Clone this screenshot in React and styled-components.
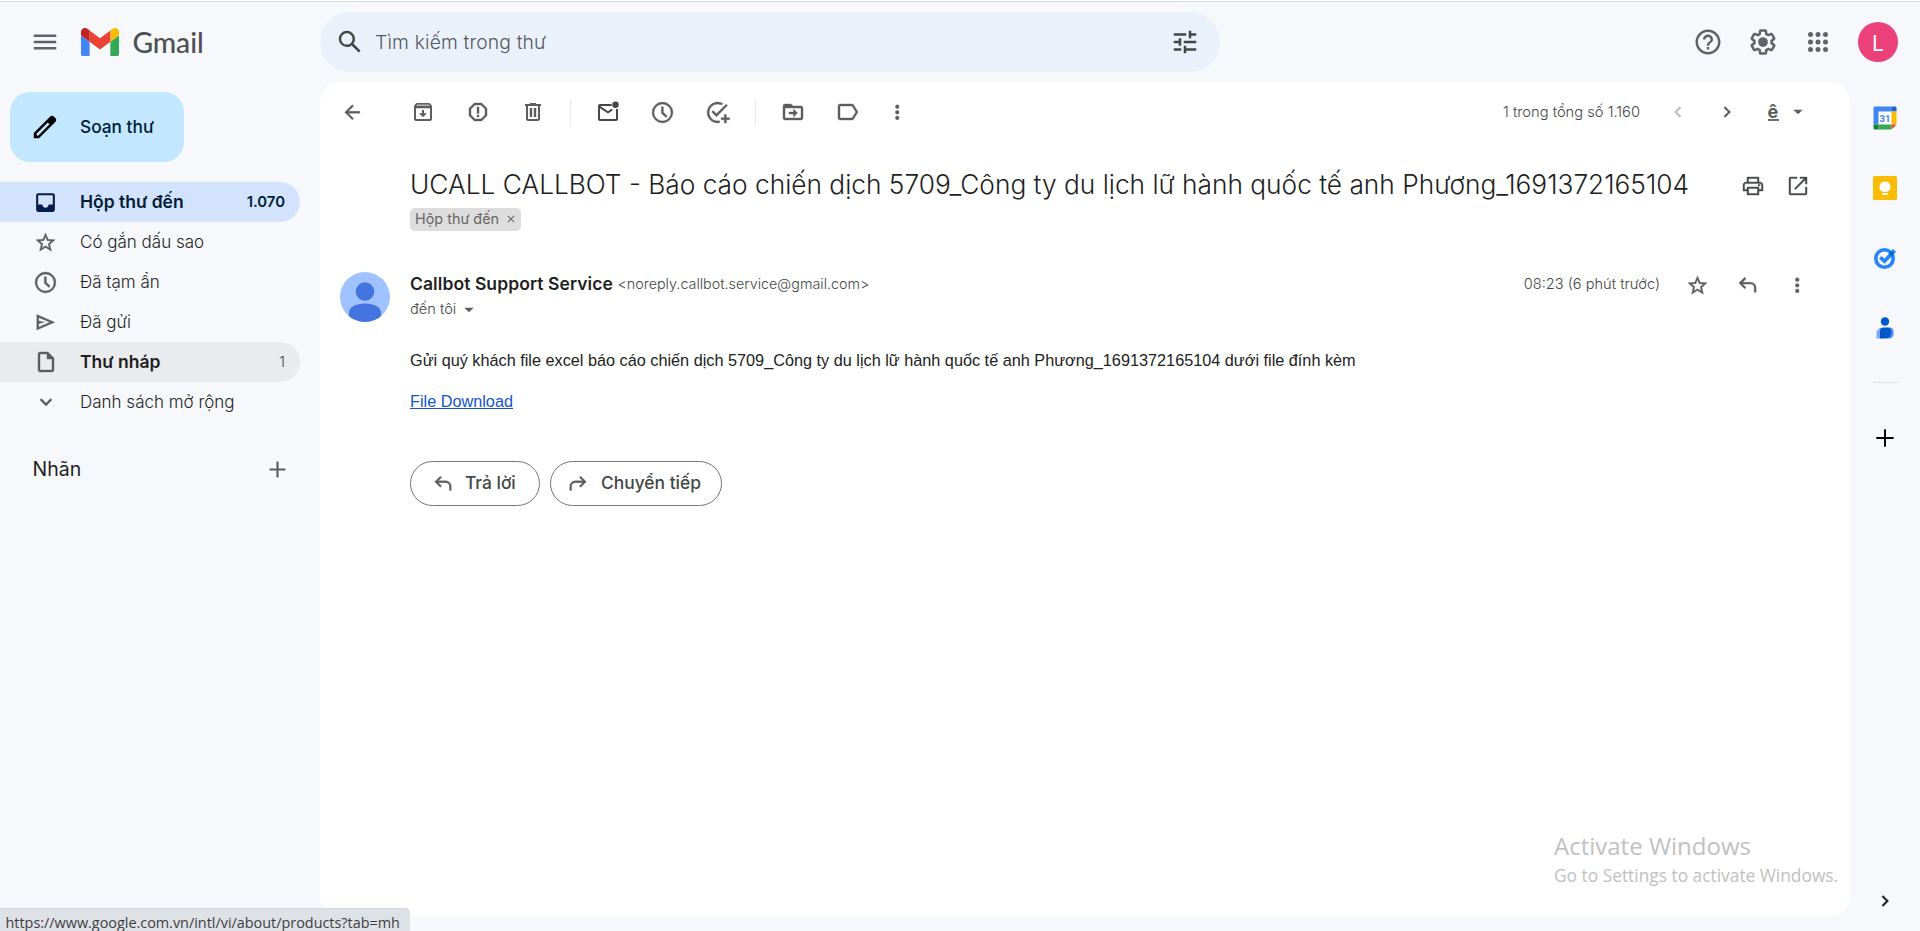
import React from "react";
import styled, { createGlobalStyle } from "styled-components";

const GlobalStyle = createGlobalStyle`
  *, *::before, *::after { box-sizing: border-box; }
  body { margin: 0; background: #f6f8fc; overflow: hidden; }
  button { border: 0; padding: 0; background: none; font: inherit; color: inherit; }
`;

const ui = `Inter, "Liberation Sans", sans-serif`;
const display = `Lato, "Liberation Sans", sans-serif`;
const system = `"Open Sans", "Noto Sans", sans-serif`;

const Page = styled.div`
  position: relative;
  display: flex;
  flex-direction: column;
  width: 1920px;
  height: 931px;
  overflow: hidden;
  background: #f6f8fc;
  color: #1f1f1f;
  font-family: ${ui};
`;
const TopEdge = styled.div`
  flex: none;
  height: 2px;
  background: #fff;
  border-bottom: 1px solid #d6dbd9;
`;
const Header = styled.header`
  flex: none;
  display: flex;
  align-items: center;
  height: 80px;
`;
const Brand = styled.div`
  display: flex;
  align-items: center;
  width: 320px;
  padding-left: 30px;
`;
const BrandName = styled.span`
  margin: -1px 0 0 13.5px;
  font: 500 28.3px/36px ${display};
  letter-spacing: -0.1px;
  color: #4d5053;
`;
const Logo = styled.svg`
  display: block;
  margin-left: 21px;
`;
const SearchBar = styled.div`
  display: flex;
  align-items: center;
  width: 900px;
  height: 60px;
  padding: 0 20px 0 15px;
  border-radius: 30px;
  background: #eaf1fb;
`;
const SearchText = styled.span`
  flex: 1;
  margin-left: 10px;
  font-size: 19.3px;
  font-weight: 300;
  letter-spacing: 0.16px;
  color: #55595d;
`;
const HeaderActions = styled.div`
  display: flex;
  align-items: center;
  margin-left: auto;
  padding-right: 22px;
`;
const HeaderButton = styled.button`
  display: grid;
  place-items: center;
  width: 55px;
  height: 50px;
`;
const Profile = styled.span`
  display: grid;
  place-items: center;
  width: 40px;
  height: 40px;
  margin-left: 13px;
  padding-top: 2px;
  border-radius: 50%;
  background: #ec407a;
  color: #fff;
  font-size: 21px;
`;
const Content = styled.div`
  flex: 1;
  display: flex;
  min-height: 0;
`;
const Sidebar = styled.nav`
  width: 320px;
  padding-top: 10px;
`;
const Compose = styled.button`
  display: flex;
  align-items: center;
  width: 174px;
  height: 70px;
  margin: 0 0 20px 10px;
  padding-left: 20px;
  border-radius: 20px;
  background: #c2e7ff;
  color: #001d35;
  font: 500 17.3px ${ui};
`;
const ComposeLabel = styled.span`
  margin: -1px 0 0 20px;
`;
const Folder = styled.div`
  display: flex;
  align-items: center;
  width: 300px;
  height: 40px;
  padding: 0 15px 0 33px;
  border-radius: 0 20px 20px 0;
  background: ${(p) => (p.$active ? "#d3e3fd" : p.$hover ? "#e9ebee" : "transparent")};
  color: ${(p) => (p.$active ? "#001d35" : "#1f1f1f")};
`;
const FolderName = styled.span`
  flex: 1;
  margin: -1px 0 0 22px;
  font: ${(p) => (p.$bold ? `600 17.5px ${ui}` : `300 17px ${ui}`)};
`;
const FolderCount = styled.span`
  margin-top: -1px;
  font: ${(p) => (p.$bold ? `600 14.9px ${ui}` : `300 14.5px ${ui}`)};
  color: ${(p) => (p.$bold ? "#001d35" : "#444746")};
`;
const LabelsHead = styled.div`
  display: flex;
  align-items: center;
  justify-content: space-between;
  height: 40px;
  margin-top: 27px;
  padding: 0 31px 0 32.5px;
  font: 400 19.5px ${ui};
`;
const Main = styled.main`
  width: 1530px;
  height: 834px;
  border-radius: 20px;
  background: #fff;
`;
const Toolbar = styled.div`
  display: flex;
  align-items: center;
  height: 60px;
  padding: 0 32.5px 0 12.5px;
`;
const ToolGroup = styled.div`
  display: flex;
  gap: 15px;
  margin-left: ${(p) => p.$before || 0}px;
`;
const Tool = styled.button`
  display: grid;
  place-items: center;
  width: 40px;
  height: 40px;
`;
const Divider = styled.i`
  width: 1px;
  height: 25px;
  margin: 0 17px;
  background: #e6e8eb;
`;
const Counter = styled.span`
  margin-left: auto;
  margin-right: 18px;
  font-size: 14.7px;
  font-weight: 300;
  color: #444746;
`;
const InputTool = styled.div`
  display: flex;
  align-items: center;
  gap: 11px;
  margin-left: 20.5px;
  padding-right: 12px;
`;
const InputGlyph = styled.span`
  width: 11px;
  height: 17px;
  font: 700 18px/15px ${ui};
  color: #5b5e5c;
  border-bottom: 2px solid #6b6e6c;
`;
const SubjectRow = styled.div`
  display: flex;
  align-items: center;
  height: 35px;
  margin: 25px 29.5px 0 90px;
`;
const Subject = styled.h1`
  flex: 1;
  margin: -1px 0 0;
  font: 300 26.28px/35px ${ui};
  white-space: nowrap;
`;
const SubjectTool = styled.button`
  display: grid;
  place-items: center;
  width: 45px;
  height: 40px;
  padding-top: 2px;
`;
const Chip = styled.div`
  display: inline-flex;
  align-items: center;
  gap: 5.5px;
  height: 23px;
  margin: 6px 0 0 90px;
  padding: 0 4.5px 2px 5px;
  border-radius: 5px;
  background: #ddd;
  color: #666;
  font-size: 14.4px;
`;
const MessageHead = styled.div`
  display: flex;
  height: 50px;
  margin: 41px 32.5px 0 20px;
`;
const Sender = styled.div`
  flex: 1;
  margin-left: 20px;
`;
const SenderLine = styled.div`
  display: flex;
  height: 25px;
  line-height: 24px;
  font-size: 14.6px;
  font-weight: 300;
  color: #444746;
  svg { margin: 5px 0 0 5px; }
`;
const SenderName = styled.span`
  margin-right: 4.5px;
  font: 600 17.5px/24px ${ui};
  letter-spacing: 0.08px;
  color: #1f1f1f;
`;
const SenderEmail = styled.span`
  font-size: 14.35px;
`;
const MessageMeta = styled.div`
  display: flex;
  align-items: center;
  height: 26px;
  gap: 10px;
`;
const Time = styled.span`
  margin-right: 7.5px;
  padding-bottom: 3px;
  font-size: 14.6px;
  font-weight: 300;
  color: #444746;
`;
const MessageBody = styled.div`
  margin: 26px 0 0 90px;
  font: 16.25px/24px "Liberation Sans", Arial, sans-serif;
  color: #222;
`;
const Paragraph = styled.p`
  margin: 0 0 17px;
`;
const Download = styled.a`
  color: #1155cc;
  text-decoration: underline;
`;
const ReplyRow = styled.div`
  display: flex;
  gap: 10px;
  margin: 48px 0 0 90px;
`;
const ReplyButton = styled.button`
  display: flex;
  align-items: center;
  gap: ${(p) => (p.$wide ? 12 : 11)}px;
  width: ${(p) => (p.$wide ? 172 : 130)}px;
  height: 45px;
  padding-left: ${(p) => (p.$wide ? 16 : 21)}px;
  border: 1px solid #747775;
  border-radius: 23px;
  color: #444746;
  font: 500 17.4px ${ui};
`;
const ReplyLabel = styled.span`
  margin-top: -2px;
`;
const Rail = styled.aside`
  display: flex;
  flex-direction: column;
  align-items: center;
  width: 70px;
  padding: 11px 0 15px;
`;
const RailItem = styled.div`
  display: grid;
  place-items: center;
  width: 50px;
  height: 50px;
  margin-bottom: 20px;
`;
const RailRule = styled.div`
  width: 25px;
  height: 1px;
  margin: 9px 0 30px;
  background: #dfe1dd;
`;
const RailToggle = styled.div`
  display: grid;
  place-items: center;
  height: 31px;
  margin-top: auto;
`;
const Watermark = styled.div`
  position: absolute;
  left: 1554px;
  top: 829px;
  font-family: ${system};
  color: #c1c1c1;
  white-space: nowrap;
`;
const WatermarkTitle = styled.div`
  font-size: 24px;
  line-height: 34px;
`;
const WatermarkText = styled.div`
  font-size: 17.35px;
  line-height: 25px;
`;
const StatusBar = styled.div`
  position: absolute;
  left: 0;
  bottom: 0;
  width: 410px;
  height: 23px;
  padding-left: 5.5px;
  border-top: 1px solid #d3d6da;
  border-radius: 0 5px 0 0;
  background: #dee1e6;
  color: #3c4043;
  font: 14.4px/27px ${system};
  white-space: nowrap;
`;

const paths = {
  menu: <path d="M3 18h18v-2H3v2zm0-5h18v-2H3v2zm0-7v2h18V6H3z" />,
  search: <path d="M20.49 19l-5.73-5.73C15.53 12.2 16 10.91 16 9.5A6.5 6.5 0 1 0 9.5 16c1.41 0 2.7-.47 3.77-1.24L19 20.49 20.49 19zM5 9.5C5 7.01 7.01 5 9.5 5S14 7.01 14 9.5 11.99 14 9.5 14 5 11.99 5 9.5z" />,
  tune: <path d="M3 17v2h6v-2H3zM3 5v2h10V5H3zm10 16v-2h8v-2h-8v-2h-2v6h2zM7 9v2H3v2h4v2h2V9H7zm14 4v-2H11v2h10zm-6-4h2V7h4V5h-4V3h-2v6z" />,
  help: <path d="M11 18h2v-2h-2v2zm1-16C6.48 2 2 6.48 2 12s4.48 10 10 10 10-4.48 10-10S17.52 2 12 2zm0 18c-4.41 0-8-3.59-8-8s3.59-8 8-8 8 3.59 8 8-3.59 8-8 8zm0-14c-2.21 0-4 1.79-4 4h2c0-1.1.9-2 2-2s2 .9 2 2c0 2-3 1.75-3 5h2c0-2.25 3-2.5 3-5 0-2.21-1.79-4-4-4z" />,
  gear: (
    <>
      <path d="M13.85 22.25h-3.7c-.74 0-1.36-.54-1.45-1.27l-.27-1.89c-.27-.14-.53-.29-.79-.46l-1.8.72c-.7.26-1.47-.03-1.81-.65L2.2 15.53c-.35-.66-.2-1.44.36-1.88l1.53-1.19c-.01-.15-.02-.3-.02-.46 0-.15.01-.31.02-.46l-1.52-1.19c-.59-.45-.74-1.26-.37-1.88l1.85-3.19c.34-.62 1.11-.9 1.79-.63l1.81.73c.26-.17.52-.32.78-.46l.27-1.91c.09-.7.71-1.25 1.44-1.25h3.7c.74 0 1.36.54 1.45 1.27l.27 1.89c.27.14.53.29.79.46l1.8-.72c.71-.26 1.48.03 1.82.65l1.84 3.18c.36.66.2 1.44-.36 1.88l-1.52 1.19c.01.15.02.3.02.46s-.01.31-.02.46l1.52 1.19c.56.45.72 1.23.37 1.86l-1.86 3.22c-.34.62-1.11.9-1.8.63l-1.8-.72c-.26.17-.52.32-.78.46l-.27 1.91c-.1.68-.72 1.22-1.46 1.22zm-3.23-2h2.76l.37-2.55.53-.22c.44-.18.88-.44 1.34-.78l.45-.34 2.38.96 1.38-2.4-2.03-1.58.07-.56c.03-.26.06-.51.06-.78s-.03-.53-.06-.78l-.07-.56 2.03-1.58-1.39-2.4-2.39.96-.45-.35c-.42-.32-.87-.58-1.33-.77l-.52-.22-.37-2.55h-2.76l-.37 2.55-.53.21c-.44.19-.88.44-1.34.79l-.45.33-2.38-.95-1.39 2.39 2.03 1.58-.07.56a7 7 0 0 0-.06.79c0 .26.02.53.06.78l.07.56-2.03 1.58 1.38 2.4 2.39-.96.45.35c.43.33.86.58 1.33.77l.53.22.38 2.55z" />
      <circle cx="12" cy="12" r="3.9" />
    </>
  ),
  apps: <path d="M6 8a2 2 0 1 0 0-4 2 2 0 0 0 0 4zm6 12a2 2 0 1 0 0-4 2 2 0 0 0 0 4zm-6 0a2 2 0 1 0 0-4 2 2 0 0 0 0 4zm0-6a2 2 0 1 0 0-4 2 2 0 0 0 0 4zm6 0a2 2 0 1 0 0-4 2 2 0 0 0 0 4zm4-8a2 2 0 1 0 4 0 2 2 0 0 0-4 0zm-4 2a2 2 0 1 0 0-4 2 2 0 0 0 0 4zm6 6a2 2 0 1 0 0-4 2 2 0 0 0 0 4zm0 6a2 2 0 1 0 0-4 2 2 0 0 0 0 4z" />,
  pencil: <path fillRule="evenodd" d="M20.41 4.94l-1.35-1.35c-.78-.78-2.05-.78-2.83 0L3 16.82V21h4.18L20.41 7.77c.79-.78.79-2.05 0-2.83zM6.3 19.1L4.9 17.7 14.2 8.4 15.6 9.8z" />,
  inbox: <path d="M19 3H5c-1.1 0-2 .9-2 2v14c0 1.1.9 2 2 2h14c1.1 0 2-.9 2-2V5c0-1.1-.9-2-2-2zm0 11h-4c0 1.66-1.35 3-3 3s-3-1.34-3-3H5V5h14v9z" />,
  star: <path d="M22 9.24l-7.19-.62L12 2 9.19 8.63 2 9.24l5.46 4.73L5.82 21 12 17.27 18.18 21l-1.63-7.03L22 9.24zM12 15.4l-3.76 2.27 1-4.28-3.32-2.88 4.38-.38L12 6.1l1.71 4.04 4.38.38-3.32 2.88 1 4.28L12 15.4z" />,
  clock: <path d="M12 2a10 10 0 1 0 0 20 10 10 0 0 0 0-20zm0 18.2a8.2 8.2 0 1 1 0-16.4 8.2 8.2 0 0 1 0 16.4zM12.8 6.5h-1.9v6.1l4.4 4.2 1.2-1.5-3.7-3.5z" />,
  send: <path fillRule="evenodd" d="M3 3.8v16.4L22 12 3 3.8zm2 3L17 12 5 17.2V13.4L11 12 5 10.6V6.8z" />,
  file: <path fillRule="evenodd" d="M14 2H6a2 2 0 0 0-2 2v16a2 2 0 0 0 2 2h12a2 2 0 0 0 2-2V8l-6-6zM6 20V4h7v5h5v11H6z" />,
  expand: <path d="M16.59 8.59L12 13.17 7.41 8.59 6 10l6 6 6-6z" />,
  plus: <path d="M20 12.9h-7.1V20h-1.8v-7.1H4v-1.8h7.1V4h1.8v7.1H20z" />,
  back: <path d="M20 11H7.83l5.59-5.59L12 4l-8 8 8 8 1.41-1.41L7.83 13H20v-2z" />,
  archive: (
    <>
      <path fillOpacity=".45" d="M4 4h16v4H4z" />
      <path fillRule="evenodd" d="M20.5 5.2l-1.4-1.7A1.5 1.5 0 0 0 18 3H6c-.5 0-.9.2-1.2.5L3.5 5.2c-.3.4-.5.8-.5 1.3V19c0 1.1.9 2 2 2h14c1.1 0 2-.9 2-2V6.5c0-.5-.2-.9-.5-1.3zM6.2 4.6h11.6l1 1.4H5.2l1-1.4zM5 19V8.2h14V19H5z" />
      <path d="M11 10h2v3.2h3l-4 4-4-4h3z" />
    </>
  ),
  spam: <path fillRule="evenodd" d="M15.7 3H8.3L3 8.3v7.4L8.3 21h7.4l5.3-5.3V8.3L15.7 3zM19 14.9L14.9 19H9.1L5 14.9V9.1L9.1 5h5.8L19 9.1v5.8zM11 7h2v6.5h-2V7zm0 8h2v2h-2z" />,
  trash: <path fillRule="evenodd" d="M15 4V3H9v1H4v2h1v13c0 1.1.9 2 2 2h10c1.1 0 2-.9 2-2V6h1V4h-5zm2 15H7V6h10v13zM8.8 8h2.4v9H8.8zm4 0h2.4v9h-2.4z" />,
  unread: <path fillRule="evenodd" d="M15.7 4H4a2 2 0 0 0-2 2v13c0 1.1.9 2 2 2h16a2 2 0 0 0 2-2V9h-2v10H4V8.3l8 5.2 4.9-3.2-1.4-1.5L12 11.2 4.3 6h11.4zM19.5 1.6a3.2 3.2 0 1 0 0 6.4 3.2 3.2 0 0 0 0-6.4z" />,
  task: (
    <>
      <path d="M12 20.1A8.1 8.1 0 1 1 15.8 4.8l1.4-1.4A10 10 0 1 0 14 21.8v-1.9c-.6.1-1.3.2-2 .2z" />
      <path d="M21.6 5.3l-1.3-1.3L11 13.3 7.8 10.1 6.4 11.5 11 16.1zM20.5 14h-2v3h-3v2h3v3h2v-3h3v-2h-3z" />
    </>
  ),
  move: (
    <>
      <path fillRule="evenodd" d="M20 6h-8l-2-2H4a2 2 0 0 0-2 2v12c0 1.1.9 2 2 2h16a2 2 0 0 0 2-2V8a2 2 0 0 0-2-2zm0 12H4V8h16v10z" />
      <path d="M12.5 17l4-4-4-4v3H8v2h4.5z" />
    </>
  ),
  label: <path fillRule="evenodd" d="M16 4H4a2 2 0 0 0-2 2v12c0 1.1.9 2 2 2h12c.7 0 1.2-.3 1.6-.8L22 12l-4.4-7.2A2 2 0 0 0 16 4zM4 18V6h12l3.8 6L16 18H4z" />,
  more: <path d="M12 8a2 2 0 1 0 0-4 2 2 0 0 0 0 4zm0 2a2 2 0 1 0 0 4 2 2 0 0 0 0-4zm0 6a2 2 0 1 0 0 4 2 2 0 0 0 0-4z" />,
  left: <path d="M15.4 7.4L14 6l-6 6 6 6 1.4-1.4L10.8 12z" />,
  right: <path d="M10 6L8.6 7.4l4.6 4.6-4.6 4.6L10 18l6-6z" />,
  caret: <path d="M5 8.5l7 7 7-7z" />,
  print: <path fillRule="evenodd" d="M19 8h-1V3H6v5H5c-1.66 0-3 1.34-3 3v6h4v4h12v-4h4v-6c0-1.66-1.34-3-3-3zM7.6 4.6h8.8V8H7.6V4.6zM16.4 19.4H7.6v-4.8h8.8v4.8zM18 15.4V13H6v2.4H3.6V11c0-.8.6-1.4 1.4-1.4h14c.8 0 1.4.6 1.4 1.4v4.4H18zM17 10.5h1.8V12H17z" />,
  open: <path d="M19.4 19.4H4.6V4.6H11V3H4.5C3.67 3 3 3.7 3 4.5v15c0 .8.7 1.5 1.5 1.5h15c.8 0 1.5-.7 1.5-1.5V13h-1.6v6.4zM14 3v1.6h4.2l-9.8 9.8 1.2 1.2 9.8-9.8V10H21V3h-7z" />,
  reply: <path d="M10 8.5h5a6 6 0 0 1 6 6V19h-2v-4.5a4 4 0 0 0-4-4H6.8l3.7 3.6L9 15.5l-6-6 6-6 1.5 1.4-3.7 3.6z" />,
  close: <path d="M19 6.4L17.6 5 12 10.6 6.4 5 5 6.4l5.6 5.6L5 17.6 6.4 19l5.6-5.6 5.6 5.6 1.4-1.4-5.6-5.6z" />,
};

const Glyph = styled.svg`
  display: block;
  flex: none;
  fill: ${(p) => p.$color};
  stroke: ${(p) => p.$color};
  stroke-width: ${(p) => (p.$heavy ? 0.4 : 0)};
  transform: ${(p) => (p.$flip ? "scaleX(-1)" : "none")};
`;
const Icon = ({ name, size = 24, color = "#5b5e5d", flip, heavy }) => (
  <Glyph viewBox="0 0 24 24" width={size} height={size} $color={color} $flip={flip} $heavy={heavy}>
    {paths[name]}
  </Glyph>
);

const GmailLogo = () => (
  <Logo width="38" height="28.5" viewBox="52 42 88 66">
    <path fill="#4285f4" d="M58 108h14V74L52 59v43c0 3.32 2.69 6 6 6" />
    <path fill="#34a853" d="M120 108h14c3.32 0 6-2.69 6-6V59l-20 15" />
    <path fill="#fbbc04" d="M120 48v26l20-15v-8c0-7.42-8.47-11.65-14.4-7.2" />
    <path fill="#ea4335" d="M72 74V48l24 18 24-18v26L96 92" />
    <path fill="#c5221f" d="M52 51v8l20 15V48l-5.6-4.2c-5.94-4.45-14.4-.22-14.4 7.2" />
  </Logo>
);
const Avatar = () => (
  <svg width="50" height="50" viewBox="0 0 50 50">
    <clipPath id="round"><circle cx="25" cy="25" r="25" /></clipPath>
    <g clipPath="url(#round)">
      <path fill="#a0c3ff" d="M0 0h50v50H0z" />
      <g fill="#4374e0">
        <circle cx="25" cy="19.5" r="9.3" />
        <path d="M9 50V41c0-6 7-9.5 16-9.5S41 35 41 41v9z" />
      </g>
    </g>
  </svg>
);
const DayNumber = styled.text`
  font: 700 9.5px Roboto, sans-serif;
  fill: #4285f4;
`;
const Calendar = () => (
  <svg width="24" height="24" viewBox="0 0 24 24">
    <path fill="#fff" d="M5 5h14v14H5z" />
    <path fill="#4285f4" d="M2 .5h16.5V5.5H5.5v13H.5V2C.5 1.2 1.2.5 2 .5z" />
    <path fill="#1967d2" d="M18.5.5H22c.8 0 1.5.7 1.5 1.5v3.5h-5z" />
    <path fill="#fbbc04" d="M18.5 5.5h5v13h-5z" />
    <path fill="#34a853" d="M5.5 18.5h13v5h-13z" />
    <path fill="#188038" d="M.5 18.5h5v5H2c-.8 0-1.5-.7-1.5-1.5z" />
    <path fill="#ea4335" d="M18.5 23.5v-5h5z" />
    <DayNumber x="12" y="15.5" textAnchor="middle">31</DayNumber>
  </svg>
);
const Keep = () => (
  <svg width="24" height="24" viewBox="0 0 24 24">
    <rect width="24" height="24" rx="1.5" fill="#fbbc04" />
    <path fill="#fff" d="M12 5.5a5.5 5.5 0 0 0-2.7 10.3h5.4A5.5 5.5 0 0 0 12 5.5zM9.3 17h5.4v2H9.3z" />
  </svg>
);
const Tasks = () => (
  <svg width="24" height="24" viewBox="0 0 24 24">
    <circle cx="11.5" cy="12.5" r="8.7" fill="none" stroke="#2684fc" strokeWidth="3.6" />
    <path d="M7.3 11.3l4.2 3.9 8.3-8.7" fill="none" stroke="#2684fc" strokeWidth="3.7" />
    <path d="M16.8 9.3l4.8-4.9" stroke="#2684fc" strokeWidth="4" />
    <path d="M17.2 9l2.8-2.9" stroke="#0066da" strokeWidth="4" />
  </svg>
);
const Contacts = () => (
  <svg width="24" height="24" viewBox="0 0 24 24">
    <circle cx="12" cy="5.5" r="4.2" fill="#0057cc" />
    <path fill="#7baaf7" d="M9 12h-.5a5 5 0 0 0-5 5v5.5H9z" />
    <path fill="#4c8df6" d="M14 11.5h2.5a4 4 0 0 1 4 4V18a4.5 4.5 0 0 1-4.5 4.5h-2z" />
    <path fill="#0057cc" d="M10.5 11.5H14a4 4 0 0 1 4 4V17a5.5 5.5 0 0 1-5.5 5.5H7V15a3.5 3.5 0 0 1 3.5-3.5z" />
  </svg>
);

const folders = [
  { name: "Hộp thư đến", icon: "inbox", size: 25, color: "#041e49", count: "1.070", active: true },
  { name: "Có gắn dấu sao", icon: "star", size: 23 },
  { name: "Đã tạm ẩn", icon: "clock", size: 25 },
  { name: "Đã gửi", icon: "send", size: 22.5 },
  { name: "Thư nháp", icon: "file", size: 24, count: "1", hover: true },
  { name: "Danh sách mở rộng", icon: "expand", size: 24 },
];
const IconSlot = styled.span`
  display: grid;
  place-items: center;
  width: 25px;
  height: 25px;
`;

export default function App() {
  return (
    <Page>
      <GlobalStyle />
      <TopEdge />
      <Header>
        <Brand>
          <Icon name="menu" size={30} color="#5f6368" />
          <GmailLogo />
          <BrandName>Gmail</BrandName>
        </Brand>
        <SearchBar>
          <Icon name="search" size={30} color="#444746" />
          <SearchText>Tìm kiếm trong thư</SearchText>
          <Icon name="tune" size={30} color="#444746" />
        </SearchBar>
        <HeaderActions>
          <HeaderButton><Icon name="help" size={30} color="#5f6368" /></HeaderButton>
          <HeaderButton><Icon name="gear" size={30} color="#5f6368" /></HeaderButton>
          <HeaderButton><Icon name="apps" size={30} color="#5f6368" /></HeaderButton>
          <Profile>L</Profile>
        </HeaderActions>
      </Header>
      <Content>
        <Sidebar>
          <Compose>
            <Icon name="pencil" size={30} color="#000" />
            <ComposeLabel>Soạn thư</ComposeLabel>
          </Compose>
          {folders.map((f) => (
            <Folder key={f.name} $active={f.active} $hover={f.hover}>
              <IconSlot><Icon name={f.icon} size={f.size} color={f.color} heavy={!f.active} /></IconSlot>
              <FolderName $bold={f.active || f.hover}>{f.name}</FolderName>
              {f.count && <FolderCount $bold={f.active}>{f.count}</FolderCount>}
            </Folder>
          ))}
          <LabelsHead>
            Nhãn
            <Icon name="plus" size={23} heavy />
          </LabelsHead>
        </Sidebar>
        <Main>
          <Toolbar>
            <Tool><Icon name="back" size={22.5} heavy /></Tool>
            <ToolGroup $before={30}>
              <Tool><Icon name="archive" /></Tool>
              <Tool><Icon name="spam" heavy /></Tool>
              <Tool><Icon name="trash" size={24} /></Tool>
            </ToolGroup>
            <Divider />
            <ToolGroup>
              <Tool><Icon name="unread" color="#444746" /></Tool>
              <Tool><Icon name="clock" size={25} heavy /></Tool>
              <Tool><Icon name="task" size={25} heavy /></Tool>
            </ToolGroup>
            <Divider />
            <ToolGroup>
              <Tool><Icon name="move" heavy /></Tool>
              <Tool><Icon name="label" heavy /></Tool>
            </ToolGroup>
            <ToolGroup $before={10}>
              <Tool><Icon name="more" size={22.5} heavy /></Tool>
            </ToolGroup>
            <Counter>1 trong tổng số 1.160</Counter>
            <Tool><Icon name="left" size={22} color="#bcbebd" heavy /></Tool>
            <ToolGroup $before={9}>
              <Tool><Icon name="right" size={22} heavy /></Tool>
            </ToolGroup>
            <InputTool>
              <InputGlyph>ê</InputGlyph>
              <Icon name="caret" size={16} />
            </InputTool>
          </Toolbar>
          <SubjectRow>
            <Subject>UCALL CALLBOT - Báo cáo chiến dịch 5709_Công ty du lịch lữ hành quốc tế anh Phương_1691372165104</Subject>
            <SubjectTool><Icon name="print" color="#444746" heavy /></SubjectTool>
            <SubjectTool><Icon name="open" color="#444746" heavy /></SubjectTool>
          </SubjectRow>
          <Chip>
            Hộp thư đến
            <Icon name="close" size={12} color="#666" />
          </Chip>
          <MessageHead>
            <Avatar />
            <Sender>
              <SenderLine>
                <SenderName>Callbot Support Service</SenderName>
                <SenderEmail>&lt;noreply.callbot.service@gmail.com&gt;</SenderEmail>
              </SenderLine>
              <SenderLine>
                đến tôi
                <Icon name="caret" size={16} />
              </SenderLine>
            </Sender>
            <MessageMeta>
              <Time>08:23 (6 phút trước)</Time>
              <Tool><Icon name="star" size={23} heavy /></Tool>
              <Tool><Icon name="reply" size={23} heavy /></Tool>
              <Tool><Icon name="more" size={22.5} heavy /></Tool>
            </MessageMeta>
          </MessageHead>
          <MessageBody>
            <Paragraph>
              Gửi quý khách file excel báo cáo chiến dịch 5709_Công ty du lịch lữ hành quốc tế anh Phương_1691372165104 dưới file đính kèm
            </Paragraph>
            <Download>File Download</Download>
          </MessageBody>
          <ReplyRow>
            <ReplyButton>
              <Icon name="reply" size={22} heavy />
              <ReplyLabel>Trả lời</ReplyLabel>
            </ReplyButton>
            <ReplyButton $wide>
              <Icon name="reply" size={22} flip heavy />
              <ReplyLabel>Chuyển tiếp</ReplyLabel>
            </ReplyButton>
          </ReplyRow>
        </Main>
        <Rail>
          <RailItem><Calendar /></RailItem>
          <RailItem><Keep /></RailItem>
          <RailItem><Tasks /></RailItem>
          <RailItem><Contacts /></RailItem>
          <RailRule />
          <RailItem><Icon name="plus" size={26} color="#000" /></RailItem>
          <RailToggle><Icon name="right" size={22} color="#1f1f1f" heavy /></RailToggle>
        </Rail>
      </Content>
      <Watermark>
        <WatermarkTitle>Activate Windows</WatermarkTitle>
        <WatermarkText>Go to Settings to activate Windows.</WatermarkText>
      </Watermark>
      <StatusBar>https://www.google.com.vn/intl/vi/about/products?tab=mh</StatusBar>
    </Page>
  );
}
